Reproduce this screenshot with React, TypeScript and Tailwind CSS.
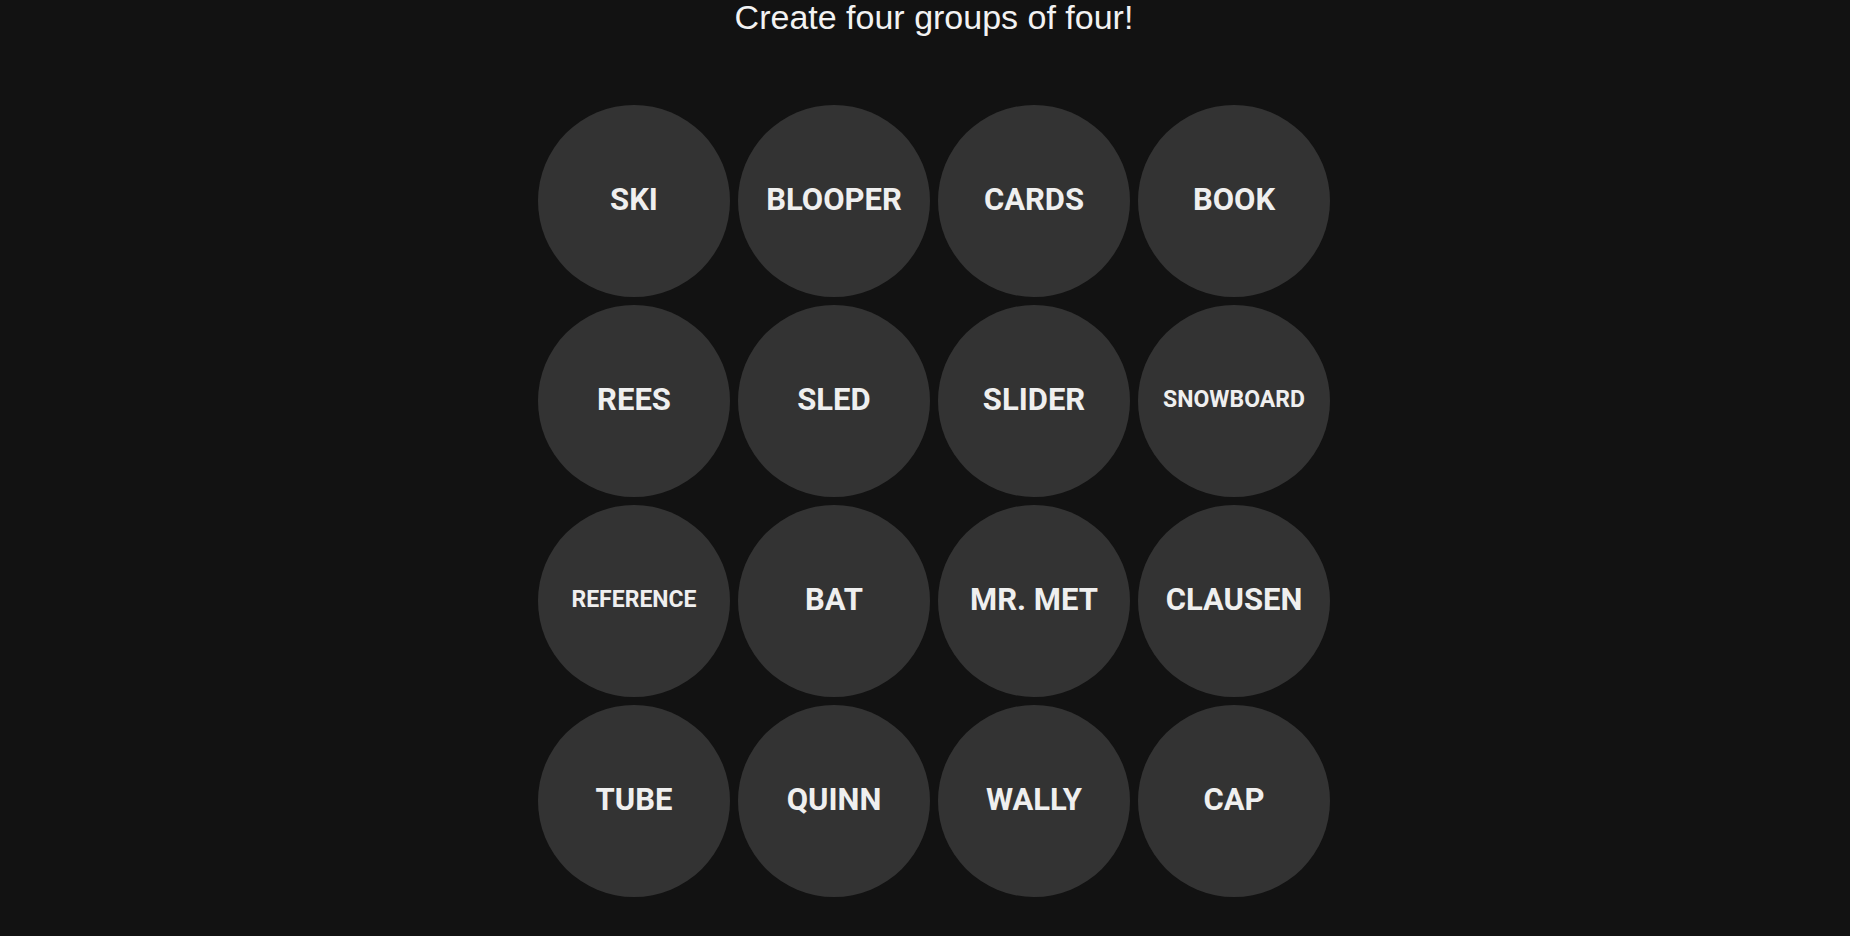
const words = [
  "SKI", "BLOOPER", "CARDS", "BOOK",
  "REES", "SLED", "SLIDER", "SNOWBOARD",
  "REFERENCE", "BAT", "MR. MET", "CLAUSEN",
  "TUBE", "QUINN", "WALLY", "CAP",
];

function Tile({ word }: { word: string }) {
  const small = word.length > 7;
  return (
    <button
      className={
        "w-[192px] h-[192px] rounded-full bg-[#333333] text-[#efefef] font-bold flex items-center justify-center pb-[2px] " +
        (small ? "text-[23px]" : "text-[31px]")
      }
      style={{ fontFamily: "Roboto, 'Liberation Sans', sans-serif" }}
    >
      {word}
    </button>
  );
}

export default function App() {
  return (
    <div className="min-h-screen bg-[#121212] pl-[18px] flex flex-col items-center">
      <h1
        className="text-[34px] leading-none text-[#f2f2f2] font-normal"
        style={{ fontFamily: "'Liberation Sans', Arial, sans-serif" }}
      >
        Create four groups of four!
      </h1>

      <div className="mt-[71px] grid grid-cols-4 gap-2">
        {words.map((w) => (
          <Tile key={w} word={w} />
        ))}
      </div>
    </div>
  );
}
